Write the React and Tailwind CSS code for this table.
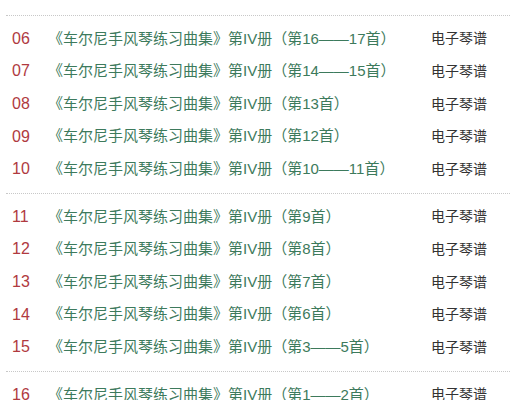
import React from "react";

const groups = [
  [{ no: "05", title: "《车尔尼手风琴练习曲集》第IV册（第18——19首）" }],
  [
    { no: "06", title: "《车尔尼手风琴练习曲集》第IV册（第16——17首）" },
    { no: "07", title: "《车尔尼手风琴练习曲集》第IV册（第14——15首）" },
    { no: "08", title: "《车尔尼手风琴练习曲集》第IV册（第13首）" },
    { no: "09", title: "《车尔尼手风琴练习曲集》第IV册（第12首）" },
    { no: "10", title: "《车尔尼手风琴练习曲集》第IV册（第10——11首）" },
  ],
  [
    { no: "11", title: "《车尔尼手风琴练习曲集》第IV册（第9首）" },
    { no: "12", title: "《车尔尼手风琴练习曲集》第IV册（第8首）" },
    { no: "13", title: "《车尔尼手风琴练习曲集》第IV册（第7首）" },
    { no: "14", title: "《车尔尼手风琴练习曲集》第IV册（第6首）" },
    { no: "15", title: "《车尔尼手风琴练习曲集》第IV册（第3——5首）" },
  ],
  [
    { no: "16", title: "《车尔尼手风琴练习曲集》第IV册（第1——2首）" },
    { no: "17", title: "《车尔尼手风琴练习曲集》第III册（第19——20首）" },
  ],
];

function Row({ no, title }) {
  return (
    <div className="flex items-center h-[32.6px] whitespace-nowrap">
      <span className="w-[48px] pl-[12px] text-[16px] text-[#b03a3f] shrink-0">{no}</span>
      <span className="w-[383px] text-[15px] text-[#3d7a5c] shrink-0">{title}</span>
      <span className="text-[14px] text-[#333]">电子琴谱</span>
    </div>
  );
}

export default function App() {
  return (
    <div
      className="w-[510px] h-[400px] overflow-hidden bg-white"
      style={{ fontFamily: '"Liberation Sans", "Noto Sans CJK SC", sans-serif' }}
    >
      <div className="-mt-[32px]">
        {groups.map((group, i) => (
          <div key={i} className="border-b border-dotted border-[#c8c8c8] ml-[6px] py-[7px]">
            <div className="-ml-[6px]">
              {group.map((r) => (
                <Row key={r.no} {...r} />
              ))}
            </div>
          </div>
        ))}
      </div>
    </div>
  );
}
